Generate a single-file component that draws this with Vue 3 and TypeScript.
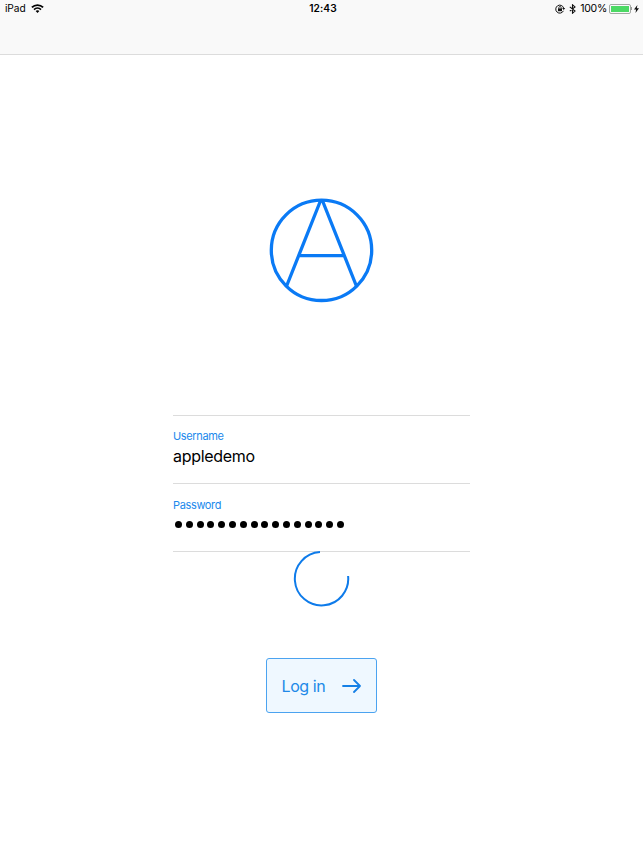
<script setup lang="ts">
import { ref } from 'vue'

const username = ref('appledemo')
const passwordLength = ref(16)
const battery = ref(100)
</script>

<template>
  <div class="screen">
    <header class="topbar">
      <div class="status">
        <div class="status-left">
          <span class="device">iPad</span>
          <svg class="wifi" width="13" height="9" viewBox="0 0 13 9" fill="none" stroke="#000">
            <path d="M0.9 3.4C4 .4 9 .4 12.1 3.4" stroke-width="1.9" />
            <path d="M3 5.6c2-1.9 5-1.9 7 0" stroke-width="1.7" />
            <path d="M6.5 8.9 4.6 7.1c1.1-1 2.7-1 3.8 0z" fill="#000" stroke="none" />
          </svg>
        </div>
        <span class="time">12:43</span>
        <div class="status-right">
          <svg class="lock" width="11" height="10" viewBox="0 0 11 10" fill="none" stroke="#111">
            <path d="M8.4 6.8A4 4 0 1 1 8.6 4" stroke-width="1" />
            <path d="M7.2 4.1h3L8.7 6.1z" fill="#111" stroke="none" />
            <rect x="3" y="4.4" width="4" height="2.8" fill="#111" stroke="none" />
            <path d="M3.8 4.6V3.7a1.2 1.2 0 0 1 2.4 0v.9" stroke-width=".8" />
          </svg>
          <svg class="bluetooth" width="7" height="10" viewBox="0 0 7 10" fill="none" stroke="#111">
            <path d="M.8 2.8 6 7.1 3.5 9.2V.8L6 2.9.8 7.2" stroke-width="1.1" />
          </svg>
          <span class="percent">{{ battery }}%</span>
          <span class="battery">
            <span class="battery-level" :style="{ width: battery + '%' }"></span>
          </span>
          <span class="battery-cap"></span>
          <svg class="bolt" width="5" height="8" viewBox="0 0 5 8">
            <path d="M3.4 0 0 4.4h2.1L1.5 8 5 3.3H2.8z" fill="#111" />
          </svg>
        </div>
      </div>
    </header>

    <main class="login">
      <svg class="logo" width="105" height="105" viewBox="0 0 105 105" fill="none" stroke="#0a7af5" stroke-width="3.3">
        <circle cx="52.5" cy="52.3" r="50.2" />
        <path d="M17.4 88.5 51.6 2.5M87.6 88.5 53.4 2.5M30 57.6h45" />
      </svg>

      <form class="fields" @submit.prevent>
        <div class="field">
          <label for="username">Username</label>
          <input id="username" v-model="username" type="text" />
        </div>
        <div class="field">
          <label>Password</label>
          <div class="dots">
            <span v-for="n in passwordLength" :key="n" class="dot"></span>
          </div>
        </div>
      </form>

      <svg class="spinner" width="57" height="57" viewBox="0 0 57 57" fill="none">
        <path d="M27 1.1A26.7 26.7 0 1 0 55.1 25" stroke="#0e7bea" stroke-width="2" />
      </svg>

      <button type="button" class="submit">
        <span>Log in</span>
        <svg width="19" height="14" viewBox="0 0 19 14" fill="none" stroke="#1580e6" stroke-width="1.8" stroke-linecap="round" stroke-linejoin="round">
          <path d="M1 7h17M12 1l6 6-6 6" />
        </svg>
      </button>
    </main>
  </div>
</template>

<style>
body {
  background: #fff;
}
</style>

<style scoped>
.screen {
  height: 858px;
  background: #fff;
  font-family: Inter, "Liberation Sans", sans-serif;
  color: #000;
  overflow: hidden;
}

.topbar {
  box-sizing: border-box;
  height: 55px;
  background: #f9f9f9;
  border-bottom: 1px solid #dcdcdc;
}

.status {
  display: grid;
  grid-template-columns: 1fr auto 1fr;
  align-items: center;
  height: 17px;
  padding: 0 4px 0 5px;
  font-size: 10.5px;
  line-height: 17px;
}

.status-left,
.status-right {
  display: flex;
  align-items: center;
}

.status-right {
  justify-content: flex-end;
}

.device {
  font-size: 10.2px;
  letter-spacing: -0.1px;
}

.wifi {
  margin-left: 5px;
}

.time {
  padding-left: 2px;
  font-size: 10.2px;
  font-weight: 600;
  letter-spacing: 0.1px;
}

.bluetooth {
  margin: 0 4px 0 3px;
}

.percent {
  letter-spacing: -0.25px;
}

.battery {
  box-sizing: border-box;
  width: 22px;
  height: 10px;
  margin-left: 2px;
  padding: 1px;
  border: 1px solid #a3a8a3;
  border-radius: 2px;
}

.battery-level {
  display: block;
  height: 6px;
  background: #4cd964;
}

.battery-cap {
  width: 1px;
  height: 3px;
  margin-right: 2px;
  background: #999;
}

.login {
  display: flex;
  flex-direction: column;
  align-items: center;
  padding-top: 143px;
}

.fields {
  width: 297px;
  margin-top: 112px;
  border-top: 1px solid #dcdcdc;
}

.field {
  box-sizing: border-box;
  height: 68px;
  padding-top: 11px;
  border-bottom: 1px solid #dcdcdc;
}

.field + .field {
  padding-top: 12px;
}

.field label {
  display: block;
  height: 17px;
  font-size: 11px;
  line-height: 18px;
  letter-spacing: -0.35px;
  color: #2089ec;
}

.field input {
  display: block;
  width: 100%;
  height: 24px;
  padding: 0;
  border: none;
  outline: none;
  background: none;
  font-family: inherit;
  font-size: 16px;
  letter-spacing: -0.3px;
  color: #000;
}

.dots {
  display: flex;
  gap: 3.8px;
  padding: 8px 0 0 2px;
}

.dot {
  width: 7px;
  height: 7px;
  border-radius: 50%;
  background: #000;
}

.spinner {
  margin-top: -1px;
}

.submit {
  box-sizing: border-box;
  display: flex;
  align-items: center;
  justify-content: space-between;
  width: 111px;
  height: 55px;
  margin-top: 50px;
  padding: 0 15px 0 14.5px;
  border: 1px solid #4ba3f0;
  border-radius: 3px;
  background: #eff8ff;
  font-family: inherit;
  font-size: 16px;
  letter-spacing: -0.4px;
  color: #2089e8;
}
</style>
